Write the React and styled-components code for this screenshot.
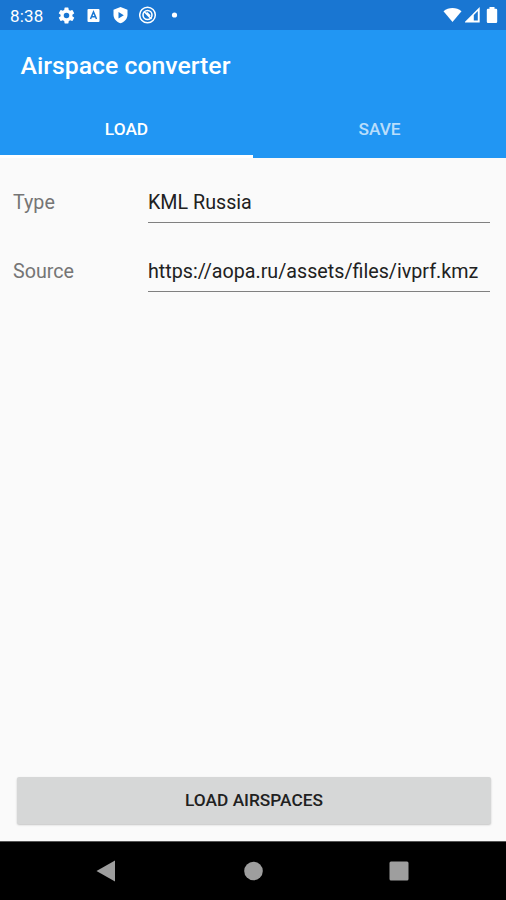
import React, { useState } from 'react';
import styled, { createGlobalStyle } from 'styled-components';

const GlobalStyle = createGlobalStyle`
    * {
        box-sizing: border-box;
    }
    body {
        margin: 0;
        font-family: Roboto, sans-serif;
        background-color: #fafafa;
    }
`;

const Screen = styled.div`
    display: flex;
    flex-direction: column;
    width: 506px;
    height: 900px;
    overflow: hidden;
    background-color: #fafafa;
`;

const StatusBar = styled.div`
    display: flex;
    align-items: center;
    justify-content: space-between;
    height: 30px;
    padding: 0 5px 0 10px;
    background-color: #1976d2;
    color: #fff;
`;

const StatusGroup = styled.div`
    display: flex;
    align-items: center;
    height: 30px;
    gap: ${(props) => props.$gap};
`;

const Clock = styled.span`
    width: 38px;
    font-size: 17px;
    line-height: 32px;
    letter-spacing: 0.2px;
    padding-top: 2px;
`;

const AppBar = styled.header`
    height: 71px;
    padding: 0 20.5px;
    background-color: #2196f3;
`;

const Title = styled.h1`
    margin: 0;
    font-size: 24.8px;
    font-weight: 500;
    line-height: 72px;
    color: #fff;
`;

const Tabs = styled.div`
    display: flex;
    height: 57px;
    background-color: #2196f3;
`;

const Tab = styled.button`
    flex: 1;
    padding: 2px 0 0;
    border: none;
    border-bottom: 3px solid ${(props) => (props.$active ? '#fff' : 'transparent')};
    background: none;
    font-family: inherit;
    font-size: 17.3px;
    font-weight: 500;
    color: ${(props) => (props.$active ? '#fff' : 'rgba(255, 255, 255, 0.7)')};
    cursor: pointer;
`;

const Form = styled.main`
    flex: 1;
    padding: 19px 16px 0 13px;
`;

const Row = styled.label`
    display: flex;
    height: 69px;
`;

const Label = styled.span`
    width: 135px;
    font-size: 19.7px;
    line-height: 52px;
    color: #757575;
`;

const Input = styled.input`
    flex: 1;
    min-width: 0;
    height: 46px;
    padding: 6px 0 0;
    border: none;
    border-bottom: 1px solid #808080;
    border-radius: 0;
    outline: none;
    background: none;
    font-family: inherit;
    font-size: 19.7px;
    color: #212121;
`;

const Footer = styled.div`
    padding: 0 15px 17px 17px;
`;

const LoadButton = styled.button`
    display: block;
    width: 100%;
    height: 47px;
    padding: 0 0 2px;
    border: none;
    border-radius: 2px;
    background-color: #d6d7d7;
    box-shadow: 0 1px 2px rgba(0, 0, 0, 0.22);
    font-family: inherit;
    font-size: 17.3px;
    font-weight: 500;
    color: #212121;
    cursor: pointer;
`;

const NavBar = styled.nav`
    display: flex;
    align-items: center;
    justify-content: space-between;
    height: 59px;
    padding: 0 96px 0 95px;
    border-top: 1px solid #555;
    background-color: #000;
`;

const Icon = styled.svg`
    display: block;
    flex: none;
`;

function StatusIcons() {
    return (
        <>
            <Icon width="19" height="19" viewBox="0 0 24 24" fill="#fff">
                <path d="M19.4 13c.04-.3.07-.66.07-1s-.03-.7-.07-1l2.1-1.65a.5.5 0 0 0 .12-.64l-2-3.46a.5.5 0 0 0-.6-.22l-2.5 1a7.3 7.3 0 0 0-1.69-.98l-.38-2.65A.49.49 0 0 0 14 2h-4a.49.49 0 0 0-.49.42l-.38 2.65c-.61.25-1.17.58-1.69.98l-2.49-1a.5.5 0 0 0-.61.22l-2 3.46a.49.49 0 0 0 .12.64L4.57 11a8 8 0 0 0 0 2l-2.11 1.65a.5.5 0 0 0-.12.64l2 3.46c.12.22.39.3.61.22l2.49-1c.52.4 1.08.73 1.69.98l.38 2.65c.03.24.24.4.49.4h4c.25 0 .46-.16.49-.4l.38-2.65c.61-.25 1.17-.58 1.69-.98l2.49 1c.23.08.49 0 .61-.22l2-3.46a.5.5 0 0 0-.12-.64zM12 15.5a3.5 3.5 0 1 1 0-7 3.5 3.5 0 0 1 0 7z" />
            </Icon>
            <Icon width="18" height="18" viewBox="0 0 18 18">
                <rect x="2.500" y="3" width="12" height="13" rx="1" fill="#fff" />
                <path d="M5.5 13l3-7 3 7M6.7 10.8h3.6" fill="none" stroke="#1976d2" strokeWidth="1.5" />
            </Icon>
            <Icon width="18" height="18" viewBox="0 0 18 18">
                <path d="M8.5 1l7 2.7v5c0 4-3 7.3-7 8.6-4-1.3-7-4.6-7-8.600v-5z" fill="#fff" />
                <path d="M6.5 6l5.3 3.2-5.3 3.2z" fill="#1976d2" />
            </Icon>
            <Icon width="18" height="18" viewBox="0 0 18 18" fill="none" stroke="#fff">
                <circle cx="8.5" cy="9" r="7.8" strokeWidth="1.5" />
                <circle cx="8.5" cy="9" r="4.5" strokeWidth="1.6" />
                <path d="M5.300 5.800l7.200 7.200M7.700 6.500l3.400 3.300" strokeWidth="1.6" />
            </Icon>
            <Icon width="18" height="18" viewBox="0 0 18 18">
                <circle cx="8.5" cy="9" r="2.6" fill="#fff" />
            </Icon>
        </>
    );
}

function SignalIcons() {
    return (
        <>
            <Icon width="20" height="18" viewBox="0 0 20 18">
                <path d="M.500 5.200C5.500 .8 13.500 .8 18.500 5.200L9.500 16z" fill="#fff" />
            </Icon>
            <Icon width="16" height="18" viewBox="0 0 16 18">
                <path d="M-.8 16.500L14.700 1v15.500z" fill="#fff" />
                <path d="M8.800 9L12.800 5v9.500h-4z" fill="#1976d2" />
            </Icon>
            <Icon width="18" height="18" viewBox="0 0 18 18">
                <path d="M6.500 1h5v1.800H13q1.200 0 1.200 1.200v11.800q0 1.200-1.200 1.200H5q-1.200 0-1.200-1.200V4q0-1.200 1.200-1.200h1.500z" fill="#fff" />
            </Icon>
        </>
    );
}

function App() {
    const [tab, setTab] = useState('load');
    const [type, setType] = useState('KML Russia');
    const [source, setSource] = useState('https://aopa.ru/assets/files/ivprf.kmz');

    return (
        <>
            <GlobalStyle />
            <Screen>
                <StatusBar>
                    <StatusGroup $gap="9px">
                        <Clock>8:38</Clock>
                        <StatusIcons />
                    </StatusGroup>
                    <StatusGroup $gap="2px">
                        <SignalIcons />
                    </StatusGroup>
                </StatusBar>
                <AppBar>
                    <Title>Airspace converter</Title>
                </AppBar>
                <Tabs>
                    <Tab $active={tab === 'load'} onClick={() => setTab('load')}>LOAD</Tab>
                    <Tab $active={tab === 'save'} onClick={() => setTab('save')}>SAVE</Tab>
                </Tabs>
                <Form>
                    <Row>
                        <Label>Type</Label>
                        <Input value={type} onChange={(e) => setType(e.target.value)} />
                    </Row>
                    <Row>
                        <Label>Source</Label>
                        <Input value={source} onChange={(e) => setSource(e.target.value)} />
                    </Row>
                </Form>
                <Footer>
                    <LoadButton>LOAD AIRSPACES</LoadButton>
                </Footer>
                <NavBar>
                    <Icon width="22" height="22" viewBox="0 0 22 22" fill="#9e9e9e">
                        <path d="M1.5 11L20 .5v21z" />
                    </Icon>
                    <Icon width="20" height="20" viewBox="0 0 20 20" fill="#9e9e9e">
                        <circle cx="10.5" cy="10" r="9.3" />
                    </Icon>
                    <Icon width="22" height="22" viewBox="0 0 22 22" fill="#9e9e9e">
                        <rect x="1.5" y="1.5" width="19" height="19" rx="1.5" />
                    </Icon>
                </NavBar>
            </Screen>
        </>
    );
}

export default App;
